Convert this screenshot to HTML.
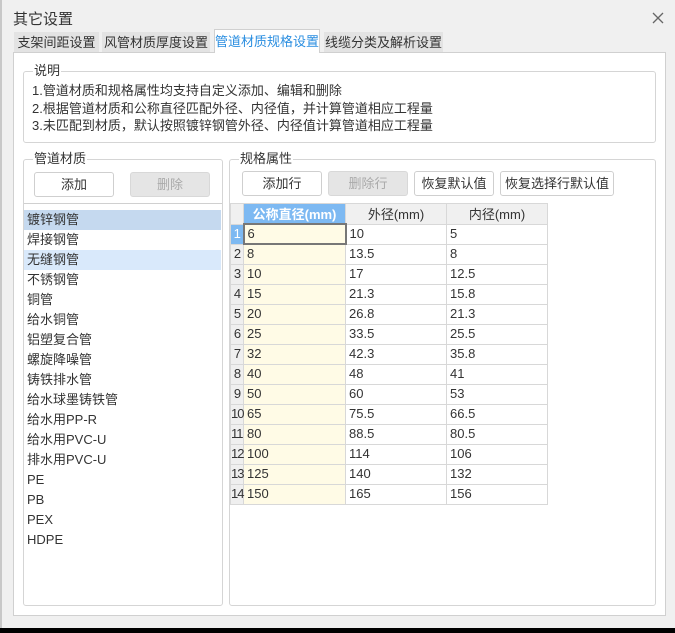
<!DOCTYPE html><html><head><meta charset="utf-8"><style>
*{box-sizing:border-box;margin:0;padding:0}
body{width:675px;height:633px;background:#000;font-family:"Liberation Sans","Noto Sans CJK SC",sans-serif;font-size:13px;color:#333;position:relative;overflow:hidden}
.win{position:absolute;left:0;top:0;width:675px;height:628px;background:#f0f0f0}
.edge{position:absolute;left:0;top:0;width:2px;height:628px;background:#c8c8c8}
.abs{position:absolute}
.tab{position:absolute;top:32px;height:21px;background:#e3e3e3;text-align:center;line-height:21px;font-size:13px;color:#333}
.panel{position:absolute;left:13px;top:52px;width:653px;height:564px;background:#fff;border:1px solid #d0d0d0}
.gb{position:absolute;border:1px solid #d5d5d5;border-radius:3px}
.gt{position:absolute;top:-9px;left:9px;background:#fff;padding:0 1px;font-size:13px;line-height:16px}
.btn{position:absolute;height:25px;border:1px solid #cfcfcf;border-radius:3px;background:#fff;text-align:center;line-height:23px;font-size:13px}
.dis{background:#e5e5e5;color:#aaa;border-color:#d8d8d8}
table{border-collapse:collapse;position:absolute;left:230px;top:203px;table-layout:fixed;width:317px}
td{border:1px solid #d8d8d8;height:20px;padding:0 0 0 3px;font-size:13px;line-height:18px;overflow:hidden;white-space:nowrap}
td.rh{background:#efefef;padding:0;text-align:left;font-size:13px;letter-spacing:-1px;overflow:visible}
td.c1{background:#fffbe6}
th{border:1px solid #d8d8d8;height:20px;font-weight:normal;background:#f0f0f0;font-size:13px;white-space:nowrap;overflow:hidden}
.li{position:absolute;left:24px;width:197px;height:20px;line-height:20px;padding-left:3px}
</style></head><body><div class="win">
<div class="edge"></div>
<div class="abs" style="left:13px;top:8px;font-size:15px">其它设置</div>
<svg class="abs" style="left:652px;top:12px" width="12" height="12"><path d="M1 1L11 11M11 1L1 11" stroke="#666" stroke-width="1.3"/></svg>
<div class="tab" style="left:14px;width:85px">支架间距设置</div>
<div class="tab" style="left:102px;width:108px">风管材质厚度设置</div>
<div class="tab" style="left:324px;width:119px">线缆分类及解析设置</div>
<div class="panel"></div>
<div class="tab" style="left:214px;top:29px;width:106px;height:24px;background:#fff;border:1px solid #d0d0d0;border-bottom:none;color:#2a8ee0;line-height:24px">管道材质规格设置</div>
<div class="gb" style="left:23px;top:71px;width:633px;height:72px"><div class="gt">说明</div>
<div class="abs" style="left:8px;top:10px;line-height:17.5px;width:600px">1.管道材质和规格属性均支持自定义添加、编辑和删除<br>2.根据管道材质和公称直径匹配外径、内径值，并计算管道相应工程量<br>3.未匹配到材质，默认按照镀锌钢管外径、内径值计算管道相应工程量</div></div>
<div class="gb" style="left:23px;top:159px;width:200px;height:447px"><div class="gt">管道材质</div></div>
<div class="gb" style="left:229px;top:159px;width:427px;height:447px"><div class="gt">规格属性</div></div>
<div class="btn" style="left:34px;top:172px;width:80px">添加</div>
<div class="btn dis" style="left:130px;top:172px;width:80px">删除</div>
<div class="abs" style="left:24px;top:203px;width:198px;border-top:1px solid #d0d0d0"></div>
<div class="li" style="top:210px;background:#c5d9ef">镀锌钢管</div>
<div class="li" style="top:230px">焊接钢管</div>
<div class="li" style="top:250px;background:#d9e9fb">无缝钢管</div>
<div class="li" style="top:270px">不锈钢管</div>
<div class="li" style="top:290px">铜管</div>
<div class="li" style="top:310px">给水铜管</div>
<div class="li" style="top:330px">铝塑复合管</div>
<div class="li" style="top:350px">螺旋降噪管</div>
<div class="li" style="top:370px">铸铁排水管</div>
<div class="li" style="top:390px">给水球墨铸铁管</div>
<div class="li" style="top:410px">给水用PP-R</div>
<div class="li" style="top:430px">给水用PVC-U</div>
<div class="li" style="top:450px">排水用PVC-U</div>
<div class="li" style="top:470px">PE</div>
<div class="li" style="top:490px">PB</div>
<div class="li" style="top:510px">PEX</div>
<div class="li" style="top:530px">HDPE</div>
<div class="btn" style="left:242px;top:171px;width:80px">添加行</div>
<div class="btn dis" style="left:328px;top:171px;width:80px">删除行</div>
<div class="btn" style="left:414px;top:171px;width:80px">恢复默认值</div>
<div class="btn" style="left:500px;top:171px;width:114px">恢复选择行默认值</div>
<table>
<colgroup><col style="width:13px"><col style="width:102px"><col style="width:101px"><col style="width:101px"></colgroup>
<tr><th></th><th style="background:#7db9f2;color:#fff;font-weight:bold">公称直径(mm)</th><th>外径(mm)</th><th>内径(mm)</th></tr>
<tr><td class="rh" style="background:#7db9f2;color:#fff;text-align:center">1</td><td class="c1" style="border:2px solid #777">6</td><td>10</td><td>5</td></tr>
<tr><td class="rh" style="text-align:center">2</td><td class="c1">8</td><td>13.5</td><td>8</td></tr>
<tr><td class="rh" style="text-align:center">3</td><td class="c1">10</td><td>17</td><td>12.5</td></tr>
<tr><td class="rh" style="text-align:center">4</td><td class="c1">15</td><td>21.3</td><td>15.8</td></tr>
<tr><td class="rh" style="text-align:center">5</td><td class="c1">20</td><td>26.8</td><td>21.3</td></tr>
<tr><td class="rh" style="text-align:center">6</td><td class="c1">25</td><td>33.5</td><td>25.5</td></tr>
<tr><td class="rh" style="text-align:center">7</td><td class="c1">32</td><td>42.3</td><td>35.8</td></tr>
<tr><td class="rh" style="text-align:center">8</td><td class="c1">40</td><td>48</td><td>41</td></tr>
<tr><td class="rh" style="text-align:center">9</td><td class="c1">50</td><td>60</td><td>53</td></tr>
<tr><td class="rh">10</td><td class="c1">65</td><td>75.5</td><td>66.5</td></tr>
<tr><td class="rh">11</td><td class="c1">80</td><td>88.5</td><td>80.5</td></tr>
<tr><td class="rh">12</td><td class="c1">100</td><td>114</td><td>106</td></tr>
<tr><td class="rh">13</td><td class="c1">125</td><td>140</td><td>132</td></tr>
<tr><td class="rh">14</td><td class="c1">150</td><td>165</td><td>156</td></tr>
</table>
</div></body></html>
